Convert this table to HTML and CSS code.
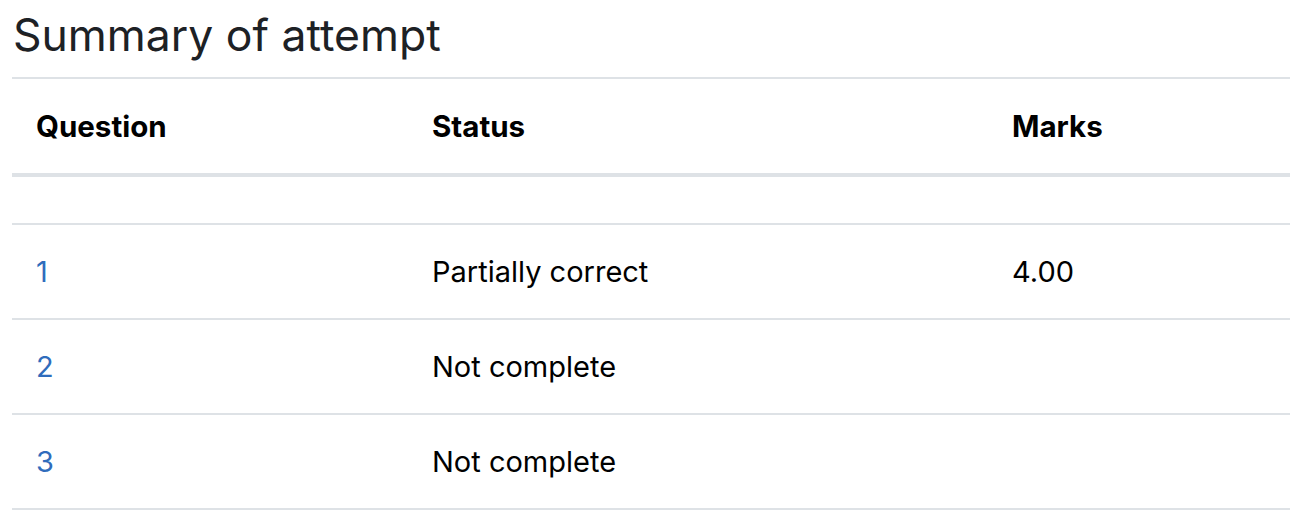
FILE: index.html
```html
<!DOCTYPE html>
<html lang="en">
<head>
<meta charset="utf-8">
<title>Summary of attempt</title>
<link rel="stylesheet" href="styles.css">
</head>
<body>
<div class="page">
  <h2 class="title">Summary of attempt</h2>
  <table class="summary">
    <colgroup>
      <col class="c-q">
      <col class="c-s">
      <col class="c-m">
    </colgroup>
    <thead>
      <tr>
        <th>Question</th>
        <th>Status</th>
        <th>Marks</th>
      </tr>
    </thead>
    <tbody>
      <tr class="empty"><td></td><td></td><td></td></tr>
      <tr><td><a href="#">1</a></td><td>Partially correct</td><td>4.00</td></tr>
      <tr><td><a href="#">2</a></td><td>Not complete</td><td></td></tr>
      <tr><td><a href="#">3</a></td><td>Not complete</td><td></td></tr>
    </tbody>
  </table>
</div>
</body>
</html>
```
FILE: styles.css
```css
html, body {
  margin: 0;
  padding: 0;
  background: #fff;
}
body {
  font-family: Inter, "Noto Sans", sans-serif;
  color: #000;
}
.page {
  padding: 0 6px 0 12px;
}
.title {
  margin: 0;
  padding: 9px 0 0 1px;
  height: 77px;
  box-sizing: border-box;
  font-size: 44.5px;
  font-weight: 400;
  line-height: 52px;
  color: #1d2125;
}
.summary {
  width: 100%;
  border-collapse: collapse;
  table-layout: fixed;
}
.c-q { width: 396px; }
.c-s { width: 580px; }
.c-m { width: auto; }
.summary th,
.summary td {
  text-align: left;
  padding: 24px;
  line-height: 45px;
  height: 45px;
  vertical-align: middle;
  border-top: 2px solid #dee2e6;
}
.summary th {
  font-size: 29.5px;
  font-weight: 700;
  height: 45px;
  line-height: 46px;
  border-bottom: 4px solid #dee2e6;
}
.summary td {
  font-size: 29px;
  font-weight: 400;
}
.summary tr.empty td {
  padding: 0;
  height: 46px;
  line-height: 0;
}
.summary tbody tr:last-child td {
  border-bottom: 2px solid #dee2e6;
}
.summary a {
  color: #2f6cbc;
  text-decoration: none;
}
```
